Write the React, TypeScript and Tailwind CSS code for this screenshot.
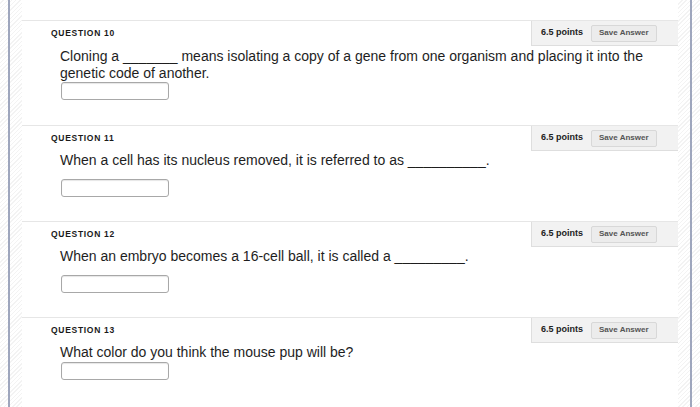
import type { ReactNode } from "react";

const hatch =
  "bg-[repeating-linear-gradient(135deg,#ffffff_0px,#ffffff_2px,#f3f3f3_2px,#f3f3f3_3px)]";

interface Question {
  num: number;
  text: ReactNode;
  textClass: string;
  inputClass: string;
  headClass: string;
}

const QUESTIONS: Question[] = [
  {
    num: 10,
    headClass: "h-[105px]",
    textClass: "mt-[2px]",
    inputClass: "mt-[0px]",
    text: (
      <>
        Cloning a _______ means isolating a copy of a gene from one organism and placing it into the
        <br />
        genetic code of another.
      </>
    ),
  },
  {
    num: 11,
    headClass: "h-[96px]",
    textClass: "mt-[1px]",
    inputClass: "mt-[10px]",
    text: <>When a cell has its nucleus removed, it is referred to as __________.</>,
  },
  {
    num: 12,
    headClass: "h-[96px]",
    textClass: "mt-[1px]",
    inputClass: "mt-[10px]",
    text: <>When an embryo becomes a 16-cell ball, it is called a _________.</>,
  },
  {
    num: 13,
    headClass: "h-[96px]",
    textClass: "mt-[1px]",
    inputClass: "mt-[1px]",
    text: <>What color do you think the mouse pup will be?</>,
  },
];

export default function App() {
  return (
    <div
      className={`flex h-[407px] w-[700px] overflow-hidden font-['Liberation_Sans',Arial,sans-serif] ${hatch}`}
    >
      <div className="w-[8px] shrink-0" />
      <div className="w-[2px] shrink-0 bg-[#9ea6bd]" />
      <div className="w-[12px] shrink-0" />
      <div className="flex w-[656px] shrink-0 flex-col bg-white pt-[20px]">
        {QUESTIONS.map((q) => (
          <QuestionBlock key={q.num} q={q} />
        ))}
      </div>
      <div className="w-[12px] shrink-0" />
      <div className="w-[2px] shrink-0 bg-[#9ea6bd]" />
    </div>
  );
}

function QuestionBlock({ q }: { q: Question }) {
  return (
    <div className={`shrink-0 border-t border-[#e6e6e6] ${q.headClass}`}>
      <div className="flex items-start justify-between">
        <div className="pl-[29px] pt-[6px] text-[8.5px] font-bold tracking-[0.7px] text-[#1a1a1a]">
          QUESTION {q.num}
        </div>
        <div className="flex h-[25px] w-[147px] items-center gap-[8px] border-b border-l border-[#dedede] bg-[#f2f2f2] pl-[9px]">
          <span className="text-[9px] font-bold text-[#222]">6.5 points</span>
          <button
            type="button"
            className="h-[17px] rounded-[2px] border border-[#d8d8d8] bg-[#ececec] px-[7px] text-[8px] font-bold text-[#555]"
          >
            Save Answer
          </button>
        </div>
      </div>
      <div className={`pl-[38px] text-[14px] leading-[17px] text-[#1e1e1e] ${q.textClass}`}>
        {q.text}
      </div>
      <div
        className={`ml-[39px] h-[18px] w-[108px] rounded-[3px] border border-[#a8a8a8] bg-white shadow-[inset_0_1px_1px_rgba(0,0,0,0.1)] ${q.inputClass}`}
      />
    </div>
  );
}
